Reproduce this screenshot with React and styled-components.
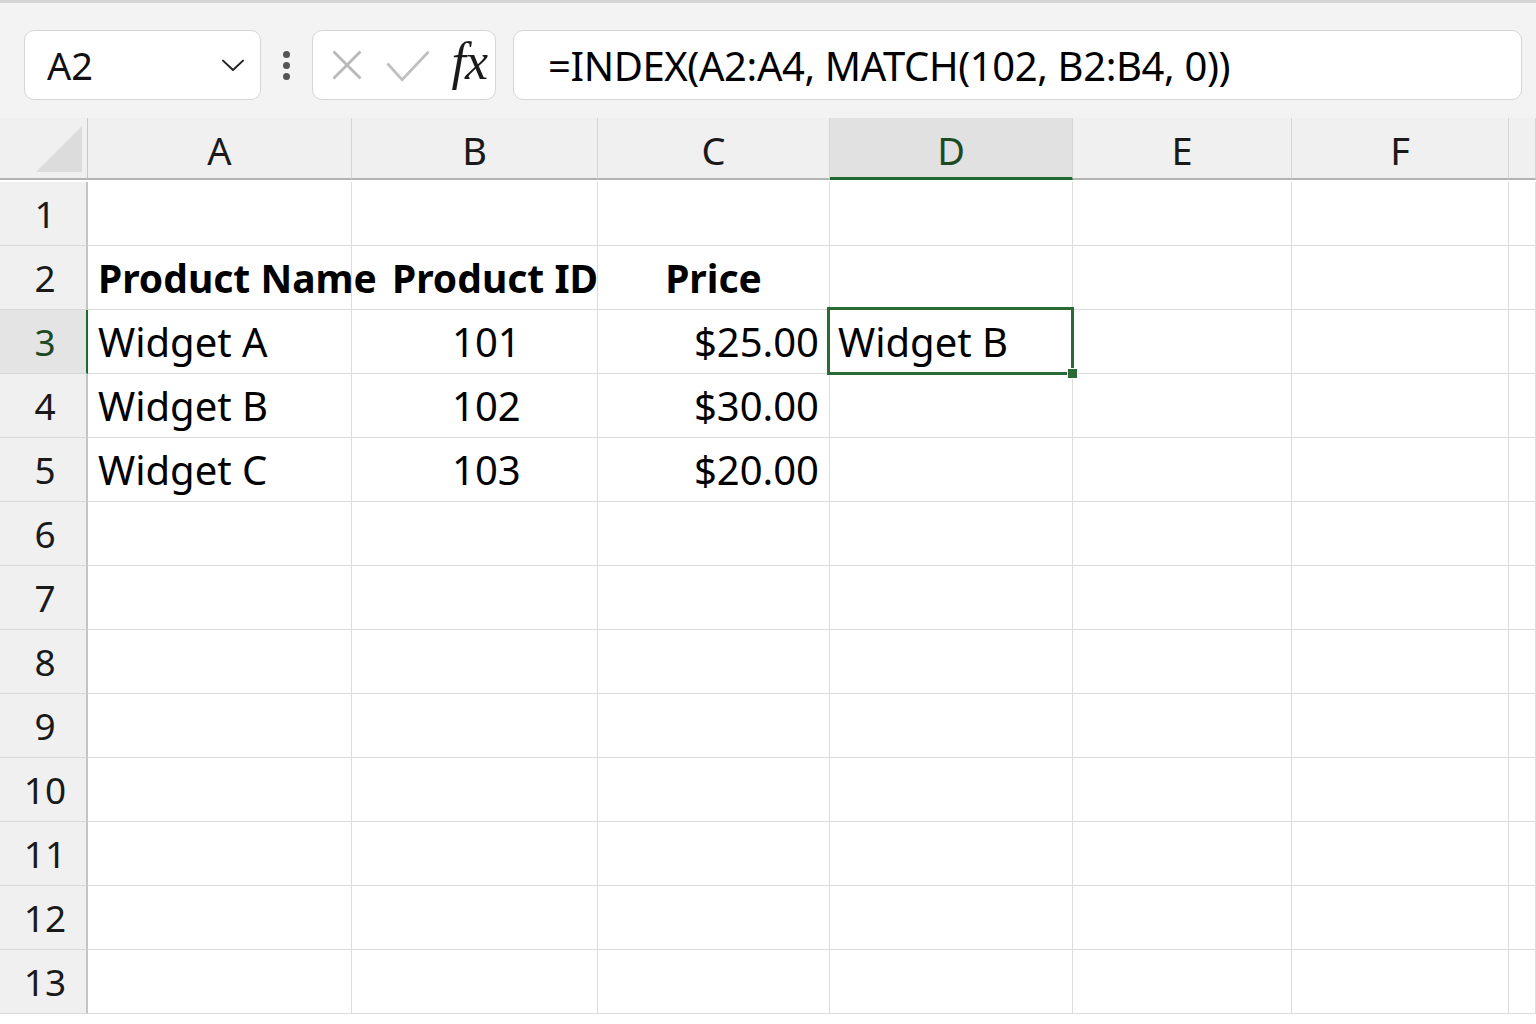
import React from 'react'
import styled, { createGlobalStyle } from 'styled-components'

const GlobalStyle = createGlobalStyle`
    html, body {
        margin: 0;
        padding: 0;
        background: #ffffff;
        overflow: hidden;
    }
    body {
        font-family: "Noto Sans", "Open Sans", sans-serif;
        color: #000000;
    }
`

const Page = styled.div`
    width: 1536px;
    height: 1024px;
    overflow: hidden;
    background: #ffffff;
`

const Toolbar = styled.div`
    height: 118px;
    box-sizing: border-box;
    border-top: 3px solid #d4d4d4;
    background: #f3f3f3;
    display: flex;
    align-items: flex-start;
    padding: 27px 14px 0 24px;
`

const Box = styled.div`
    height: 70px;
    box-sizing: border-box;
    background: #ffffff;
    border: 1px solid #d6d6d6;
    border-radius: 10px;
    display: flex;
    align-items: center;
`

const NameBox = styled(Box)`
    width: 237px;
    padding: 0 12px 0 22px;
    justify-content: space-between;
    font-size: 38px;
    color: #111111;
`

const Dots = styled.div`
    width: 51px;
    height: 70px;
    display: flex;
    flex-direction: column;
    align-items: center;
    justify-content: center;
    gap: 4px;

    & > span {
        width: 7px;
        height: 7px;
        border-radius: 50%;
        background: #555555;
    }
`

const FuncBox = styled(Box)`
    width: 184px;
    padding: 0 8px 0 16px;
    justify-content: space-between;
`

const Fx = styled.span`
    font-family: "Liberation Serif", "DejaVu Serif", serif;
    font-style: italic;
    font-size: 52px;
    color: #1a1a1a;
    margin-top: -8px;
    letter-spacing: -1px;
`

const FormulaBox = styled(Box)`
    flex: 1;
    margin-left: 17px;
    padding-left: 34px;
    font-size: 40px;
    letter-spacing: -0.4px;
    color: #000000;
`

const Grid = styled.div`
    display: grid;
    grid-template-columns: 88px 264px 246px 232px 243px 219px 217px 1fr;
    grid-auto-rows: 64px;
`

const Corner = styled.div`
    height: 62px;
    background: #f0f0f0;
    border-right: 1px solid #c8c8c8;
    border-bottom: 2px solid #b4b4b4;
    box-sizing: border-box;
    display: flex;
    align-items: flex-end;
    justify-content: flex-end;
    padding: 0 5px 6px 0;
`

const ColHead = styled.div`
    height: 62px;
    box-sizing: border-box;
    background: ${p => (p.$active ? '#e1e1e1' : '#f0f0f0')};
    border-right: 1px solid #d4d4d4;
    border-bottom: ${p => (p.$active ? '3px solid #1f6b2f' : '2px solid #b4b4b4')};
    display: flex;
    align-items: center;
    justify-content: center;
    padding-top: 4px;
    font-size: 38px;
    color: ${p => (p.$active ? '#1d4a25' : '#1a1a1a')};
`

const RowHead = styled.div`
    box-sizing: border-box;
    background: ${p => (p.$active ? '#e4e4e4' : '#f0f0f0')};
    border-right: ${p => (p.$active ? '2px solid #1f6b2f' : '2px solid #c4c4c4')};
    border-bottom: 1px solid #d8d8d8;
    display: flex;
    align-items: center;
    justify-content: center;
    padding-left: 4px;
    font-size: 37px;
    color: ${p => (p.$active ? '#1d4a25' : '#1a1a1a')};
`

const Cell = styled.div`
    position: relative;
    z-index: ${p => (p.$selected ? 2 : 'auto')};
    box-sizing: border-box;
    border-right: 1px solid #dcdcdc;
    border-bottom: 1px solid #dcdcdc;
    display: flex;
    align-items: center;
    justify-content: ${p => p.$align || 'flex-start'};
    padding: 0 ${p => p.$pr || 0}px 0 ${p => p.$pl || 0}px;
    font-size: ${p => (p.$bold ? 39 : 40)}px;
    font-weight: ${p => (p.$bold ? 700 : 400)};
    white-space: nowrap;
    color: #000000;
`

const Selection = styled.div`
    position: absolute;
    left: -3px;
    top: -3px;
    right: -2px;
    bottom: -2px;
    border: 3px solid #2a6a36;
    pointer-events: none;

    &::after {
        content: '';
        position: absolute;
        right: -7px;
        bottom: -7px;
        width: 9px;
        height: 9px;
        background: #2a6a36;
        border: 1px solid #ffffff;
    }
`

const Chevron = () => (
    <svg width="30" height="30" viewBox="0 0 24 24" fill="none" stroke="#222" strokeWidth="1.6" strokeLinecap="round" strokeLinejoin="round">
        <path d="M4 8.5l8 7.5 8-7.5" />
    </svg>
)

const CrossIcon = () => (
    <svg width="36" height="36" viewBox="0 0 24 24" fill="none" stroke="#b9b9b9" strokeWidth="1.9">
        <path d="M3 3l18 18M21 3L3 21" />
    </svg>
)

const CheckIcon = () => (
    <svg width="44" height="36" viewBox="0 0 30 24" fill="none" stroke="#c0c0c0" strokeWidth="1.9">
        <path d="M1 11l10 11L29 3" />
    </svg>
)

const CornerTriangle = () => (
    <svg width="46" height="46" viewBox="0 0 46 46">
        <polygon points="46,0 46,46 0,46" fill="#dcdcdc" />
    </svg>
)

const columns = ['A', 'B', 'C', 'D', 'E', 'F', '']

const rows = {
    2: [
        { text: 'Product Name', bold: true, pl: 10 },
        { text: 'Product ID', bold: true, pl: 40 },
        { text: 'Price', bold: true, align: 'center' },
    ],
    3: [
        { text: 'Widget A', pl: 10 },
        { text: '101', pl: 100 },
        { text: '$25.00', align: 'flex-end', pr: 10 },
        { text: 'Widget B', pl: 8, selected: true },
    ],
    4: [
        { text: 'Widget B', pl: 10 },
        { text: '102', pl: 100 },
        { text: '$30.00', align: 'flex-end', pr: 10 },
    ],
    5: [
        { text: 'Widget C', pl: 10 },
        { text: '103', pl: 100 },
        { text: '$20.00', align: 'flex-end', pr: 10 },
    ],
}

export default function App() {
    const rowNums = Array.from({ length: 13 }, (_, i) => i + 1)

    return (
        <Page>
            <GlobalStyle />
            <Toolbar>
                <NameBox>
                    <span>A2</span>
                    <Chevron />
                </NameBox>
                <Dots>
                    <span />
                    <span />
                    <span />
                </Dots>
                <FuncBox>
                    <CrossIcon />
                    <CheckIcon />
                    <Fx>fx</Fx>
                </FuncBox>
                <FormulaBox>=INDEX(A2:A4, MATCH(102, B2:B4, 0))</FormulaBox>
            </Toolbar>
            <Grid>
                <Corner>
                    <CornerTriangle />
                </Corner>
                {columns.map((c, i) => (
                    <ColHead key={i} $active={c === 'D'}>{c}</ColHead>
                ))}
                {rowNums.map(r => (
                    <React.Fragment key={r}>
                        <RowHead $active={r === 3}>{r}</RowHead>
                        {columns.map((c, i) => {
                            const cell = (rows[r] || [])[i]
                            return (
                                <Cell
                                    key={c + r + i}
                                    $bold={cell && cell.bold}
                                    $align={cell && cell.align}
                                    $pl={cell && cell.pl}
                                    $pr={cell && cell.pr}
                                    $selected={cell && cell.selected}
                                >
                                    {cell ? cell.text : ''}
                                    {cell && cell.selected && <Selection />}
                                </Cell>
                            )
                        })}
                    </React.Fragment>
                ))}
            </Grid>
        </Page>
    )
}
